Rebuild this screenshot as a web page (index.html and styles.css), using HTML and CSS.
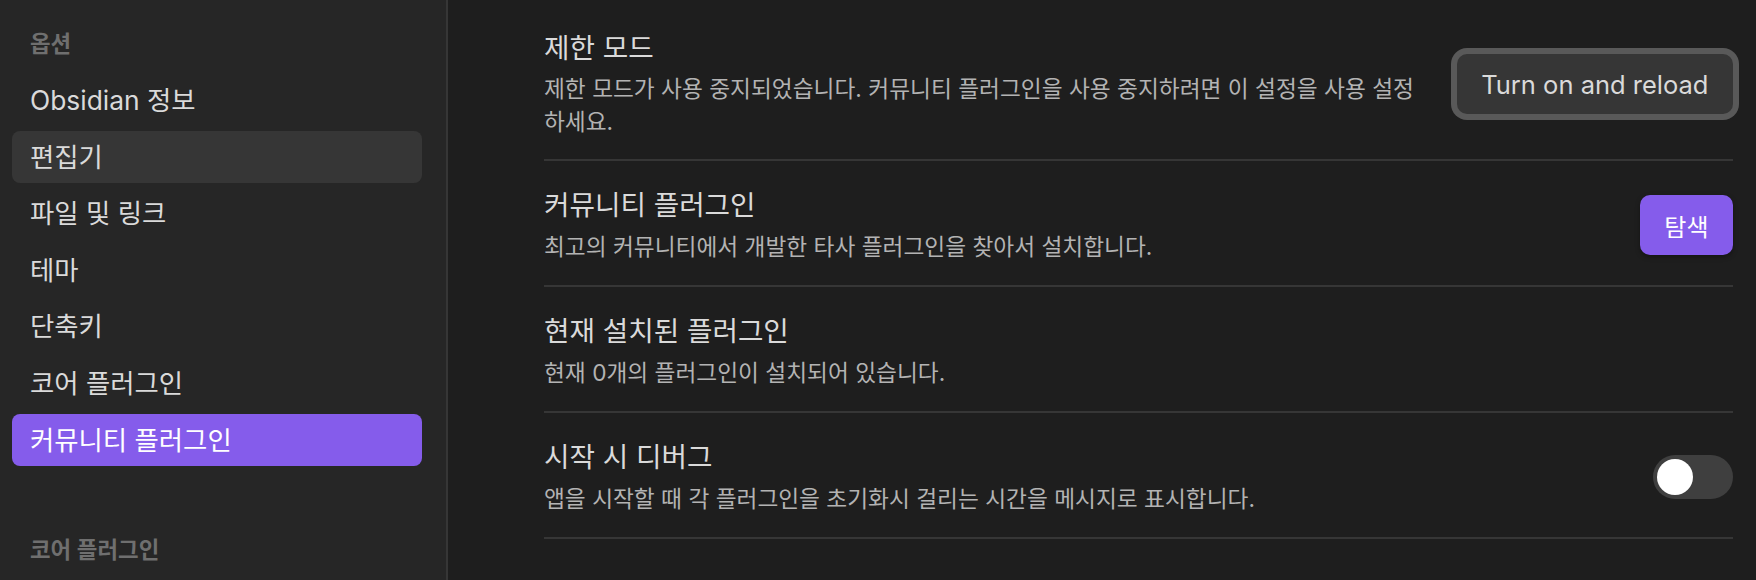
FILE: index.html
```html
<!DOCTYPE html>
<html lang="ko">
<head>
    <meta charset="UTF-8">
    <meta name="viewport" content="width=device-width, initial-scale=1.0">
    <title>설정 - 커뮤니티 플러그인</title>
    <link rel="stylesheet" href="styles.css">
</head>
<body>

    <!-- Settings navigation -->
    <nav class="sidebar">
        <div class="nav-group">
            <div class="nav-title">옵션</div>
            <div class="nav-item">Obsidian 정보</div>
            <div class="nav-item is-hover">편집기</div>
            <div class="nav-item">파일 및 링크</div>
            <div class="nav-item">테마</div>
            <div class="nav-item">단축키</div>
            <div class="nav-item">코어 플러그인</div>
            <div class="nav-item is-active">커뮤니티 플러그인</div>
        </div>
        <div class="nav-group second">
            <div class="nav-title">코어 플러그인</div>
        </div>
    </nav>

    <!-- Settings content -->
    <main class="content">
        <div class="setting-item first">
            <div class="setting-info">
                <div class="setting-name">제한 모드</div>
                <div class="setting-desc">제한 모드가 사용 중지되었습니다. 커뮤니티 플러그인을 사용 중지하려면 이 설정을 사용 설정하세요.</div>
            </div>
            <div class="setting-control">
                <button class="btn btn-reload">Turn on and reload</button>
            </div>
        </div>

        <div class="setting-item">
            <div class="setting-info">
                <div class="setting-name">커뮤니티 플러그인</div>
                <div class="setting-desc">최고의 커뮤니티에서 개발한 타사 플러그인을 찾아서 설치합니다.</div>
            </div>
            <div class="setting-control">
                <button class="btn btn-accent">탐색</button>
            </div>
        </div>

        <div class="setting-item">
            <div class="setting-info">
                <div class="setting-name">현재 설치된 플러그인</div>
                <div class="setting-desc">현재 0개의 플러그인이 설치되어 있습니다.</div>
            </div>
        </div>

        <div class="setting-item">
            <div class="setting-info">
                <div class="setting-name">시작 시 디버그</div>
                <div class="setting-desc">앱을 시작할 때 각 플러그인을 초기화시 걸리는 시간을 메시지로 표시합니다.</div>
            </div>
            <div class="setting-control">
                <div class="toggle"><div class="toggle-knob"></div></div>
            </div>
        </div>
    </main>

</body>
</html>
```

FILE: styles.css
```css
body {
    font-family: "Inter", "Noto Sans CJK KR", sans-serif;
    background-color: #1e1e1e;
    color: #dadada;
    margin: 0;
    padding: 0;
    display: flex;
    height: 580px;
    overflow: hidden;
}

/* Sidebar */
.sidebar {
    width: 448px;
    flex: none;
    background-color: #262626;
    border-right: 2px solid #363636;
    padding: 25px 24px 0 12px;
    box-sizing: border-box;
}

.nav-title {
    padding: 0 18px;
    line-height: 38px;
    font-size: 22.4px;
    font-weight: 600;
    color: #6f6f6f;
    margin-bottom: 11px;
}

.nav-item {
    height: 52px;
    line-height: 52px;
    padding: 0 18px;
    margin-bottom: 4.6px;
    font-size: 26.4px;
    border-radius: 8px;
    color: #dadada;
}

.nav-item.is-hover {
    background-color: #363636;
}

.nav-item.is-active {
    background-color: #855ceb;
    color: #ffffff;
}

.nav-group.second {
    margin-top: 65px;
}

/* Content */
.content {
    flex: 1;
    padding: 0 23px 0 96px;
}

.setting-item {
    display: flex;
    align-items: center;
    padding: 27px 0 21.5px;
    border-bottom: 2px solid #363636;
}

.setting-item.first {
    padding-top: 31px;
    padding-bottom: 21px;
}

.setting-info {
    flex: 1;
    margin-right: 28px;
}

.setting-name {
    font-size: 27.7px;
    line-height: 34px;
    color: #dadada;
}

.setting-desc {
    font-size: 22.7px;
    line-height: 33px;
    margin-top: 8.5px;
    color: #b3b3b3;
}

.first .setting-desc {
    margin-top: 6.5px;
}

.setting-control {
    flex: none;
    display: flex;
}

/* Buttons */
.btn {
    height: 60px;
    padding: 0 24.5px;
    border: none;
    border-radius: 10px;
    font-family: "Inter", "Noto Sans CJK KR", sans-serif;
    font-size: 24px;
    cursor: pointer;
}

.btn-reload {
    font-size: 25.5px;
    background-color: #363636;
    color: #dadada;
    box-shadow: 0 0 0 6px #595959;
}

.btn-accent {
    background-color: #855ceb;
    color: #ffffff;
    box-shadow: 0 2px 5px rgba(0, 0, 0, 0.35);
}

/* Toggle */
.toggle {
    width: 80px;
    height: 44px;
    border-radius: 22px;
    background-color: #3f3f3f;
    padding: 4px;
    box-sizing: border-box;
}

.toggle-knob {
    width: 36px;
    height: 36px;
    border-radius: 50%;
    background-color: #ffffff;
}
```
